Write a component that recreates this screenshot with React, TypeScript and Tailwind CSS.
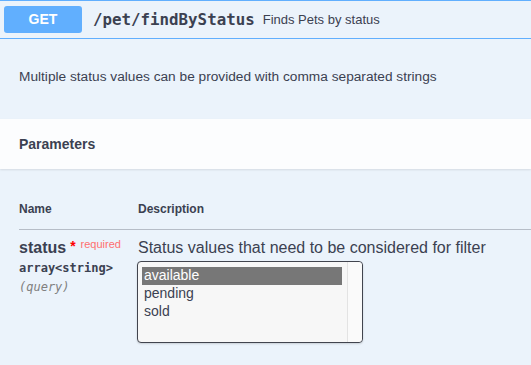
export default function App() {
  const sans = { fontFamily: '"Liberation Sans", Arial, sans-serif' }
  const mono = { fontFamily: '"DejaVu Sans Mono", "Liberation Mono", monospace' }

  return (
    <div className="w-[531px] h-[365px] overflow-hidden bg-[#ebf3fb] border-t border-[#61affe] text-[#3b4151]" style={sans}>
      {/* summary row */}
      <div className="flex items-center h-[38px] border-b border-[#61affe] pl-1">
        <div className="w-[78px] h-[27px] rounded-[3px] bg-[#61affe] text-white font-bold text-[14px] flex items-center justify-center">
          GET
        </div>
        <span className="ml-[11px] text-[15.8px] font-bold" style={mono}>
          /pet/findByStatus
        </span>
        <span className="ml-[8px] text-[13px]">Finds Pets by status</span>
      </div>

      {/* description */}
      <div className="h-[80px] px-[19px] flex items-center">
        <p className="text-[13.7px] mt-[-3px]">Multiple status values can be provided with comma separated strings</p>
      </div>

      {/* parameters header */}
      <div className="h-[50px] bg-[#fcfdfe] px-[19px] flex items-center shadow-[0_1px_2px_rgba(0,0,0,0.1)]">
        <h4 className="text-[14px] font-bold">Parameters</h4>
      </div>

      {/* table */}
      <div className="pl-[19px] pt-[31px]">
        <div className="flex text-[12px] font-bold pb-[11px] border-b border-[#3b4151]/30">
          <div className="w-[119px]">Name</div>
          <div>Description</div>
        </div>
        <div className="flex pt-[6px]">
          <div className="w-[119px]">
            <div className="flex items-start">
              <span className="text-[16px] font-bold leading-[24px]">status</span>
              <span className="text-[#ff0000] text-[14px] font-bold ml-[4px] mt-[3px] leading-[14px]">*</span>
              <span className="text-[#ff6f6f] text-[11px] ml-[5px] mt-[1px] leading-[14px]">required</span>
            </div>
            <div className="text-[12px] font-bold leading-[18px] mt-[-1px]" style={mono}>
              array&lt;string&gt;
            </div>
            <div className="text-[12px] italic text-[#808080] leading-[18px] mt-[1px]" style={mono}>
              (query)
            </div>
          </div>
          <div>
            <p className="text-[16px] leading-[24px]">Status values that need to be considered for filter</p>
            <div className="mt-[1px] ml-[-1px] w-[226px] h-[82px] rounded-[4px] border border-[#41444e] bg-[#f7f7f7] flex shadow-[0_1px_2px_rgba(0,0,0,0.15)]">
              <div className="flex-1 pl-[4px] pr-[5px] pt-[5px] text-[14px] leading-[17.5px]">
                <div className="bg-[#777777] text-white px-[2px] h-[18px]">available</div>
                <div className="px-[2px]">pending</div>
                <div className="px-[2px]">sold</div>
              </div>
              <div className="w-[15px] border-l border-[#e3e3e3] bg-[#fafafa] rounded-r-[4px]" />
            </div>
          </div>
        </div>
      </div>
    </div>
  )
}
